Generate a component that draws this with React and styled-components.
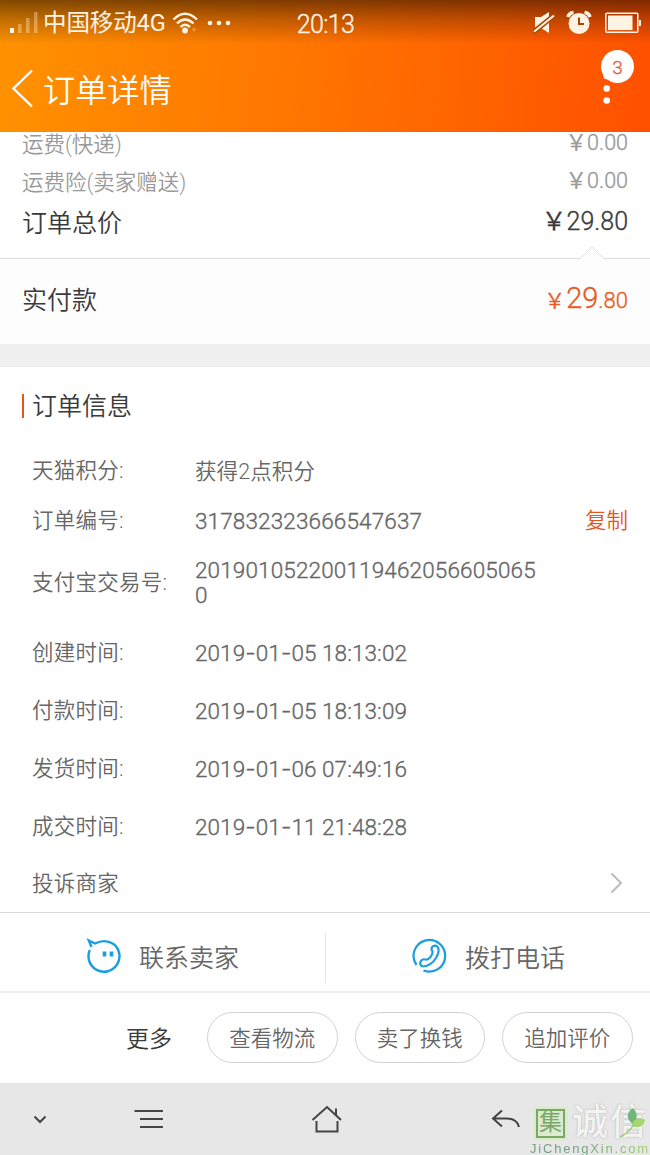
import { Fragment } from "react";
import styled, { createGlobalStyle, css } from "styled-components";

const GlobalStyle = createGlobalStyle`
  * {
    box-sizing: border-box;
  }
  body {
    margin: 0;
    background: #fff;
    font-family: Roboto, "Noto Sans CJK SC", sans-serif;
    font-weight: 350;
  }
`;

// light digits, thickened a little so they sit well beside the chinese text
const digits = css`
  -webkit-text-stroke: 0.35px currentColor;
`;

const Page = styled.div`
  position: relative;
  width: 650px;
  height: 1155px;
  overflow: hidden;
  display: flex;
  flex-direction: column;
  white-space: nowrap;
`;

const Header = styled.header`
  height: 132px;
  flex: none;
  color: #fff;
  background:
    linear-gradient(180deg, rgba(0, 0, 0, 0.5) 0, rgba(0, 0, 0, 0.24) 20px, rgba(0, 0, 0, 0) 44px),
    linear-gradient(97deg, #ff9200 0%, #ff7600 45%, #ff5000 100%);
`;

const StatusBar = styled.div`
  height: 46px;
  display: grid;
  grid-template-columns: 1fr auto 1fr;
  align-items: center;
  padding: 0 9px 0 10px;
  color: #fff3e4;
`;

const StatusGroup = styled.div`
  display: flex;
  align-items: center;
  justify-content: ${(props) => (props.$end ? "flex-end" : "flex-start")};
`;

const Carrier = styled.span`
  font-size: 23.5px;
  line-height: 30px;
  margin: 0 6px 1px 5px;
  font-weight: 400;
  letter-spacing: -0.1px;
`;

const Clock = styled.span`
  font-size: 25px;
  line-height: 30px;
  padding-top: 4px;
  letter-spacing: -0.6px;
  ${digits}
`;

const TitleBar = styled.div`
  height: 86px;
  display: flex;
  align-items: center;
  padding: 0 12px 0 11px;
`;

const Title = styled.h1`
  flex: 1;
  margin: 3px 0 0 9px;
  font-size: 32.2px;
  line-height: 40px;
  font-weight: 350;
`;

const MenuButton = styled.div`
  position: relative;
  width: 40px;
  height: 60px;
`;

const Badge = styled.span`
  position: absolute;
  top: -9px;
  right: 4px;
  width: 33px;
  height: 33px;
  border-radius: 50%;
  background: #fff;
  color: #d8623a;
  font-size: 19px;
  line-height: 36px;
  text-align: center;
  ${digits}
`;

const Fees = styled.section`
  position: relative;
  height: 127px;
  flex: none;
  border-bottom: 1px solid #dedede;
`;

const FeeRow = styled.div`
  display: flex;
  justify-content: space-between;
  align-items: center;
  padding: 0 22px;
  height: ${(props) => props.$height}px;
  font-size: ${(props) => (props.$total ? 25 : 21.5)}px;
  line-height: 24px;
  color: ${(props) => (props.$total ? "#3a3a3a" : "#999")};
`;

const Price = styled.span`
  padding-bottom: ${(props) => props.$lift || 0}px;
  ${digits}
`;

const Notch = styled.svg`
  position: absolute;
  right: 46px;
  bottom: -1px;
`;

const Payment = styled.section`
  height: 85px;
  flex: none;
  display: flex;
  justify-content: space-between;
  align-items: center;
  padding: 0 22px 8px;
  background: #fdfdfd;
  font-size: 25px;
  color: #3a3a3a;
`;

const Paid = styled.span`
  padding-top: 4px;
  color: #e85a22;
  font-size: 22px;
  line-height: 30px;
  ${digits}
`;

const Yuan = styled.span`
  font-size: 21px;
  margin-right: 1px;
`;

const Whole = styled.span`
  font-size: 29px;
`;

const Gap = styled.div`
  height: 23px;
  flex: none;
  background: #f0f0f0;
`;

const SectionTitle = styled.h2`
  height: 79px;
  flex: none;
  display: flex;
  align-items: center;
  margin: 0;
  padding: 0 22px;
  font-size: 25px;
  line-height: 30px;
  font-weight: 350;
  color: #3a3a3a;

  &::before {
    content: "";
    width: 2px;
    height: 24px;
    margin: 0 8px 1px 0;
    background: #e8541e;
  }
`;

const InfoRow = styled.div`
  height: ${(props) => props.$height}px;
  flex: none;
  display: flex;
  align-items: center;
  padding: 0 22px ${(props) => props.$lift || 0}px 32px;
  font-size: 21.5px;
  line-height: 25px;
  color: #666;
`;

const Label = styled.span`
  width: 163px;
  padding-bottom: 1px;
  letter-spacing: 0.25px;
`;

const Value = styled.span`
  width: 346px;
  font-size: ${(props) => (props.$cjk ? 21.5 : 22.5)}px;
  letter-spacing: ${(props) => (props.$cjk ? 0.1 : props.$dated ? 0.08 : 0.14)}px;
  word-break: break-all;
  white-space: normal;
  ${(props) => !props.$cjk && digits}
`;

const Dash = styled.span`
  font-family: Inter, sans-serif;
  font-size: 23px;
  line-height: 20px;
`;

const Copy = styled.span`
  margin: 0 0 1px auto;
  color: #e8541e;
`;

const Chevron = styled.svg`
  margin: 0 5px 2px auto;
`;

const Contact = styled.section`
  height: 81px;
  flex: none;
  display: flex;
  align-items: center;
  border-top: 1px solid #d6d6d6;
  border-bottom: 2px solid #efefef;
`;

const ContactButton = styled.div`
  width: 50%;
  height: 51px;
  margin-top: 10px;
  display: flex;
  align-items: center;
  padding: 0 0 2px ${(props) => props.$indent}px;
  font-size: 25px;
  color: #666;

  & + & {
    border-left: 1px solid #e8e8e8;
  }

  svg {
    margin-right: 17px;
  }
`;

const Actions = styled.section`
  height: 90px;
  flex: none;
  display: flex;
  align-items: center;
  justify-content: flex-end;
  gap: 17px;
  padding: 0 17.5px 1px 0;
`;

const More = styled.span`
  margin: 0 18px 2px 0;
  font-size: 23px;
  color: #3a3a3a;
`;

const Pill = styled.span`
  width: 130.5px;
  height: 51px;
  border: 1px solid #d2d2d2;
  border-radius: 26px;
  font-size: 21.5px;
  line-height: 51px;
  text-align: center;
  color: #666;
`;

const NavBar = styled.nav`
  height: 72px;
  flex: none;
  display: flex;
  align-items: center;
  padding-left: 32px;
  background: #e7e7e7;
`;

const NavItem = styled.svg`
  margin-left: ${(props) => props.$gap || 0}px;
  fill: none;
  stroke: #444;
  stroke-width: 2;
`;

const Watermark = styled.div`
  position: absolute;
  left: 530px;
  bottom: 0;
  width: 120px;
  height: 50px;
`;

const Marks = styled.div`
  display: flex;
  align-items: center;
  height: 36px;
  padding: 1px 0 0 6px;
`;

const Seal = styled.span`
  width: 29px;
  height: 29px;
  border: 2px solid #78a968;
  box-shadow: 0 0 3px 1px #cfeeaa;
  background: #dcebd0;
  color: #78a968;
  font-size: 23px;
  line-height: 24px;
  font-weight: 400;
  text-align: center;
`;

const MarkText = styled.span`
  margin-left: 7px;
  font-size: 36px;
  line-height: 37px;
  letter-spacing: 2px;
  font-weight: 500;
  color: #f3f3f3;
  text-shadow: 0 0 2px #aaa;
`;

const Site = styled.div`
  font-family: "Liberation Sans", sans-serif;
  font-size: 13px;
  line-height: 15px;
  font-weight: 400;
  letter-spacing: 1.8px;
  color: transparent;
  background: linear-gradient(90deg, #6f9f80 40%, #9fcf70);
  background-clip: text;
`;

const Leaf = styled.svg`
  position: absolute;
  left: 86px;
  top: 1px;
`;

const YUAN = "\uffe5";

const fees = [
  { label: "运费(快递)", price: "0.00", height: 25, lift: 3 },
  { label: "运费险(卖家赠送)", price: "0.00", height: 51, lift: 3 },
  { label: "订单总价", price: "29.80", height: 31, lift: 3, total: true },
];

const details = [
  { label: "天猫积分:", value: "获得2点积分", height: 50, cjk: true },
  { label: "订单编号:", value: "317832323666547637", height: 50, copy: true },
  { label: "支付宝交易号:", value: "2019010522001194620566050650", height: 78, lift: 4 },
  { label: "创建时间:", value: "2019-01-05 18:13:02", height: 58, dated: true },
  { label: "付款时间:", value: "2019-01-05 18:13:09", height: 58, dated: true },
  { label: "发货时间:", value: "2019-01-06 07:49:16", height: 58, dated: true },
  { label: "成交时间:", value: "2019-01-11 21:48:28", height: 58, dated: true },
];

const withDashes = (text) =>
  text.split("-").map((part, i) => (
    <Fragment key={i}>
      {i > 0 && <Dash>-</Dash>}
      {part}
    </Fragment>
  ));

const Status = () => (
  <StatusBar>
    <StatusGroup>
      <svg width="28" height="24" fill="currentColor">
        <rect x="0" y="17" width="4" height="5" />
        <rect x="8" y="13" width="3.5" height="9" opacity="0.35" />
        <rect x="16" y="7" width="3.5" height="15" opacity="0.35" />
        <rect x="24" y="1" width="3.5" height="21" opacity="0.35" />
      </svg>
      <Carrier>中国移动4G</Carrier>
      <svg width="28" height="24" viewBox="0 0 28 24" fill="none" stroke="currentColor" strokeWidth="2.4">
        <path d="M1.5 8.5Q13 -3 25 8.5M5 12.5Q13 4.5 21.5 12.5M8.5 16Q13 11.5 18 16" />
        <circle cx="13" cy="19.5" r="2.9" fill="currentColor" stroke="none" />
        <path d="M20 18.5h4M22 16.5v4" opacity="0.3" strokeWidth="1.5" />
      </svg>
      <svg width="32" height="8" fill="currentColor">
        <circle cx="10" cy="4" r="2.3" />
        <circle cx="19" cy="4" r="2.3" />
        <circle cx="28" cy="4" r="2.3" />
      </svg>
    </StatusGroup>
    <Clock>20:13</Clock>
    <StatusGroup $end>
      <svg width="22" height="24" viewBox="0 0 22 24">
        <path d="M2 6h6l8-5v21l-8-5H2z" fill="currentColor" />
        <path d="M0 21.5L21 4.5" stroke="#a84a05" strokeWidth="5" />
        <path d="M1 20.7L21 4.5" stroke="currentColor" strokeWidth="2" />
      </svg>
      <svg width="26" height="26" viewBox="0 0 26 26" style={{ margin: "0 13px 0 11px" }}>
        <path d="M2 7Q3 3 7.5 2.5M18.5 2.5Q23 3 24 7" fill="none" stroke="currentColor" strokeWidth="3.6" />
        <circle cx="13" cy="13.5" r="10.5" fill="currentColor" />
        <path d="M13 7.5v6.5h5" fill="none" stroke="#a84600" strokeWidth="2" />
      </svg>
      <svg width="36" height="22" viewBox="0 0 36 22">
        <rect x="0.8" y="1.3" width="32" height="19" rx="1" fill="none" stroke="currentColor" strokeWidth="1.5" />
        <rect x="3" y="3.5" width="24.5" height="14.6" fill="currentColor" />
        <rect x="34" y="8" width="2" height="6" fill="currentColor" />
      </svg>
    </StatusGroup>
  </StatusBar>
);

const App = () => {
  return (
    <>
      <GlobalStyle />
      <Page>
        <Header>
          <Status />
          <TitleBar>
            <svg width="23" height="40" fill="none" stroke="#fff" strokeWidth="2.4">
              <path d="M21 1.5L2.5 19.5L21 37.5" />
            </svg>
            <Title>订单详情</Title>
            <MenuButton>
              <svg width="40" height="60" fill="#fff">
                <circle cx="8.7" cy="17" r="3.3" />
                <circle cx="8.7" cy="29.5" r="3.3" />
                <circle cx="8.7" cy="41.5" r="3.3" />
              </svg>
              <Badge>3</Badge>
            </MenuButton>
          </TitleBar>
        </Header>

        <Fees>
          {fees.map((fee) => (
            <FeeRow key={fee.label} $height={fee.height} $total={fee.total}>
              <span>{fee.label}</span>
              <Price $lift={fee.lift}>
                {YUAN}
                {fee.price}
              </Price>
            </FeeRow>
          ))}
          <Notch width="24" height="13">
            <path d="M0 13L12 1L24 13" fill="#fdfdfd" stroke="#dedede" />
          </Notch>
        </Fees>
        <Payment>
          <span>实付款</span>
          <Paid>
            <Yuan>{YUAN}</Yuan>
            <Whole>29</Whole>.80
          </Paid>
        </Payment>
        <Gap />

        <SectionTitle>订单信息</SectionTitle>
        {details.map((row) => (
          <InfoRow key={row.label} $height={row.height} $lift={row.lift}>
            <Label>{row.label}</Label>
            <Value $cjk={row.cjk} $dated={row.dated}>
              {withDashes(row.value)}
            </Value>
            {row.copy && <Copy>复制</Copy>}
          </InfoRow>
        ))}
        <InfoRow $height={56}>
          <Label>投诉商家</Label>
          <Chevron width="13" height="22" fill="none" stroke="#bdbdbd" strokeWidth="2">
            <path d="M1.5 1.5L11 11L1.5 20.5" />
          </Chevron>
        </InfoRow>

        <Contact>
          <ContactButton $indent={86}>
            <svg width="36" height="36" viewBox="0 0 36 36" fill="none" stroke="#1a9ee2" strokeWidth="2.4">
              <path d="M5.5 9L2.8 2.5L9 5.5Q19 0.5 27.5 6A15.5 15.5 0 1 1 3.8 12" />
              <path d="M18.5 13.5v5M25.5 13.5v5" strokeWidth="3.6" />
            </svg>
            联系卖家
          </ContactButton>
          <ContactButton $indent={86}>
            <svg width="36" height="36" viewBox="0 0 36 36" fill="none" stroke="#1a9ee2" strokeWidth="2.2">
              <path d="M4.5 27A15.8 15.8 0 1 1 11.5 32.5" />
              <path d="M11 28.5Q19 28 24 20Q28 13 26 9.5Q24 6.5 20.5 8.5Q18.5 10.5 20.5 13.5Q21 16 18.5 19Q16 22 13.5 21.5Q10 20.5 8.5 23.5Q7.5 27.5 11 28.5" />
            </svg>
            拨打电话
          </ContactButton>
        </Contact>

        <Actions>
          <More>更多</More>
          <Pill>查看物流</Pill>
          <Pill>卖了换钱</Pill>
          <Pill>追加评价</Pill>
        </Actions>

        <NavBar>
          <NavItem width="16" height="10">
            <path d="M2.5 2.5L8 8L13.5 2.5" />
          </NavItem>
          <NavItem width="30" height="20" $gap={86}>
            <path d="M0.5 2H29M6 10H29M6 18H29" />
          </NavItem>
          <NavItem width="32" height="28" $gap={147}>
            <path d="M1.5 15L16 2L30 15M25 10V3.5M5.5 16V26.5H26.5V16" />
          </NavItem>
          <NavItem width="30" height="20" $gap={148}>
            <path d="M11 1.5L2 9.5L11 17.5M2 9.5H15Q26 9.5 28 18" />
          </NavItem>
        </NavBar>

        <Watermark>
          <Marks>
            <Seal>集</Seal>
            <MarkText>诚信</MarkText>
          </Marks>
          <Site>JiChengXin.com</Site>
          <Leaf width="30" height="34" viewBox="0 0 30 34">
            <path d="M17 18C10 14 10 6 17 2C22 7 22 13 17 18Z" fill="#72b77a" />
            <path d="M16 20C17 13 23 10 29 14C28 20 23 23 16 20Z" fill="#a6d66f" />
            <path d="M18 18Q13 27 4 31" fill="none" stroke="#9bc979" strokeWidth="1.5" />
          </Leaf>
        </Watermark>
      </Page>
    </>
  );
};

export default App;
